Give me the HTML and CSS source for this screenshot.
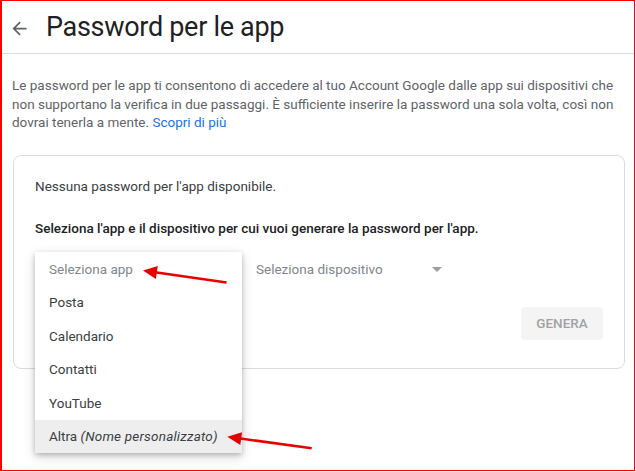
FILE: index.html
```html
<!DOCTYPE html>
<html lang="it">
<head>
<meta charset="utf-8">
<title>Password per le app</title>
<link rel="stylesheet" href="styles.css">
</head>
<body>
<div class="page">
  <header class="topbar">
    <svg class="back" viewBox="0 0 24 24" width="21" height="21" aria-hidden="true"><path d="M20 11H7.83l5.59-5.59L12 4l-8 8 8 8 1.41-1.41L7.83 13H20v-2z"/></svg>
    <h1 class="title">Password per le app</h1>
  </header>
  <main class="content">
    <p class="intro">Le password per le app ti consentono di accedere al tuo Account Google dalle app sui dispositivi che non supportano la verifica in due passaggi. È sufficiente inserire la password una sola volta, così non dovrai tenerla a mente. <a class="link" href="#">Scopri di più</a></p>
    <section class="card">
      <p class="empty">Nessuna password per l'app disponibile.</p>
      <p class="instr">Seleziona l'app e il dispositivo per cui vuoi generare la password per l'app.</p>
      <div class="selects">
        <div class="select select-app">
          <span class="placeholder">Seleziona app</span>
          <ul class="menu">
            <li class="item item-placeholder">Seleziona app</li>
            <li class="item">Posta</li>
            <li class="item">Calendario</li>
            <li class="item">Contatti</li>
            <li class="item">YouTube</li>
            <li class="item item-active">Altra&nbsp;<em>(Nome personalizzato)</em></li>
          </ul>
        </div>
        <div class="select select-device">
          <span class="placeholder">Seleziona dispositivo</span>
          <span class="caret"></span>
        </div>
      </div>
      <div class="actions">
        <button class="btn" type="button" disabled>GENERA</button>
      </div>
    </section>
  </main>
  <svg class="annotations" width="636" height="472" viewBox="0 0 636 472" aria-hidden="true">
    <line x1="226.5" y1="282.5" x2="155" y2="272.2" class="arrow-line"/>
    <polygon points="143,270.5 157.8,266.1 155.9,278.9" class="arrow-head"/>
    <line x1="311.7" y1="448.3" x2="239" y2="438.3" class="arrow-line"/>
    <polygon points="227.3,436.7 242.1,432.2 240.3,445.0" class="arrow-head"/>
  </svg>
</div>
</body>
</html>
```
FILE: styles.css
```css
html, body {
  margin: 0;
  padding: 0;
  background: #fff;
}

body {
  font-family: Roboto, "Liberation Sans", Arial, sans-serif;
  color: #202124;
}

.page {
  position: relative;
  width: 635px;
  height: 471px;
  box-sizing: border-box;
  border: 1px solid #f00;
  border-left-width: 2px;
  overflow: hidden;
}

.topbar {
  height: 52px;
  border-bottom: 1px solid #dadce0;
  display: flex;
  align-items: center;
  padding-left: 7px;
}

.back {
  fill: #5f6368;
  margin-top: 3px;
  margin-right: 16px;
  flex: none;
}

.title {
  margin: 0;
  font-size: 27px;
  font-weight: 400;
  letter-spacing: -0.3px;
  color: #202124;
  line-height: 34px;
  margin-top: -1px;
}

.content {
  padding: 22px 10px 0 10px;
}

.intro {
  margin: 0;
  width: 612px;
  font-size: 13.5px;
  line-height: 18.5px;
  color: #5f6368;
}

.link {
  color: #1a73e8;
  text-decoration: none;
}

.card {
  margin: 23px 0 0 1px;
  width: 612px;
  box-sizing: border-box;
  border: 1px solid #dadce0;
  border-radius: 8px;
  padding: 21px 21px 28px 21px;
}

.empty,
.instr {
  margin: 0;
  font-size: 13.5px;
  line-height: 19px;
}

.empty {
  color: #3c4043;
}

.instr {
  margin-top: 23px;
  font-weight: 500;
  color: #202124;
}

.selects {
  display: flex;
  margin-top: 14.5px;
  height: 33.5px;
}

.select {
  display: flex;
  align-items: center;
  font-size: 13.5px;
  color: #80868b;
}

.select-app {
  position: relative;
  width: 207px;
  padding-left: 14px;
  box-sizing: border-box;
}

.select-device {
  margin-left: 14px;
  width: 191px;
  padding-right: 5px;
  box-sizing: border-box;
  justify-content: space-between;
}

.caret {
  width: 0;
  height: 0;
  border-left: 5px solid transparent;
  border-right: 5px solid transparent;
  border-top: 5px solid #9e9e9e;
  margin-top: 1px;
}

.menu {
  position: absolute;
  top: 0;
  left: 0;
  width: 207px;
  margin: 0;
  padding: 0;
  list-style: none;
  background: #fff;
  box-shadow: 0 2px 5px rgba(0, 0, 0, 0.22), 0 4px 12px rgba(0, 0, 0, 0.14);
  z-index: 2;
}

.item {
  height: 33.5px;
  display: flex;
  align-items: center;
  padding-left: 14px;
  font-size: 13.5px;
  color: #3c4043;
}

.item-placeholder {
  color: #80868b;
}

.item-active {
  background: #eeeeee;
}

.item em {
  font-style: italic;
  letter-spacing: 0.2px;
}

.actions {
  display: flex;
  justify-content: flex-end;
  margin-top: 21px;
}

.btn {
  width: 82px;
  height: 33.5px;
  border: none;
  border-radius: 4px;
  background: #f4f4f4;
  color: #a2a2a2;
  font-family: Roboto, "Liberation Sans", Arial, sans-serif;
  font-size: 13.5px;
  font-weight: 500;
  padding: 0;
}

.annotations {
  position: absolute;
  left: -2px;
  top: -1px;
  pointer-events: none;
  z-index: 5;
}

.arrow-line {
  stroke: #e60000;
  stroke-width: 2.5;
}

.arrow-head {
  fill: #e60000;
}
```
